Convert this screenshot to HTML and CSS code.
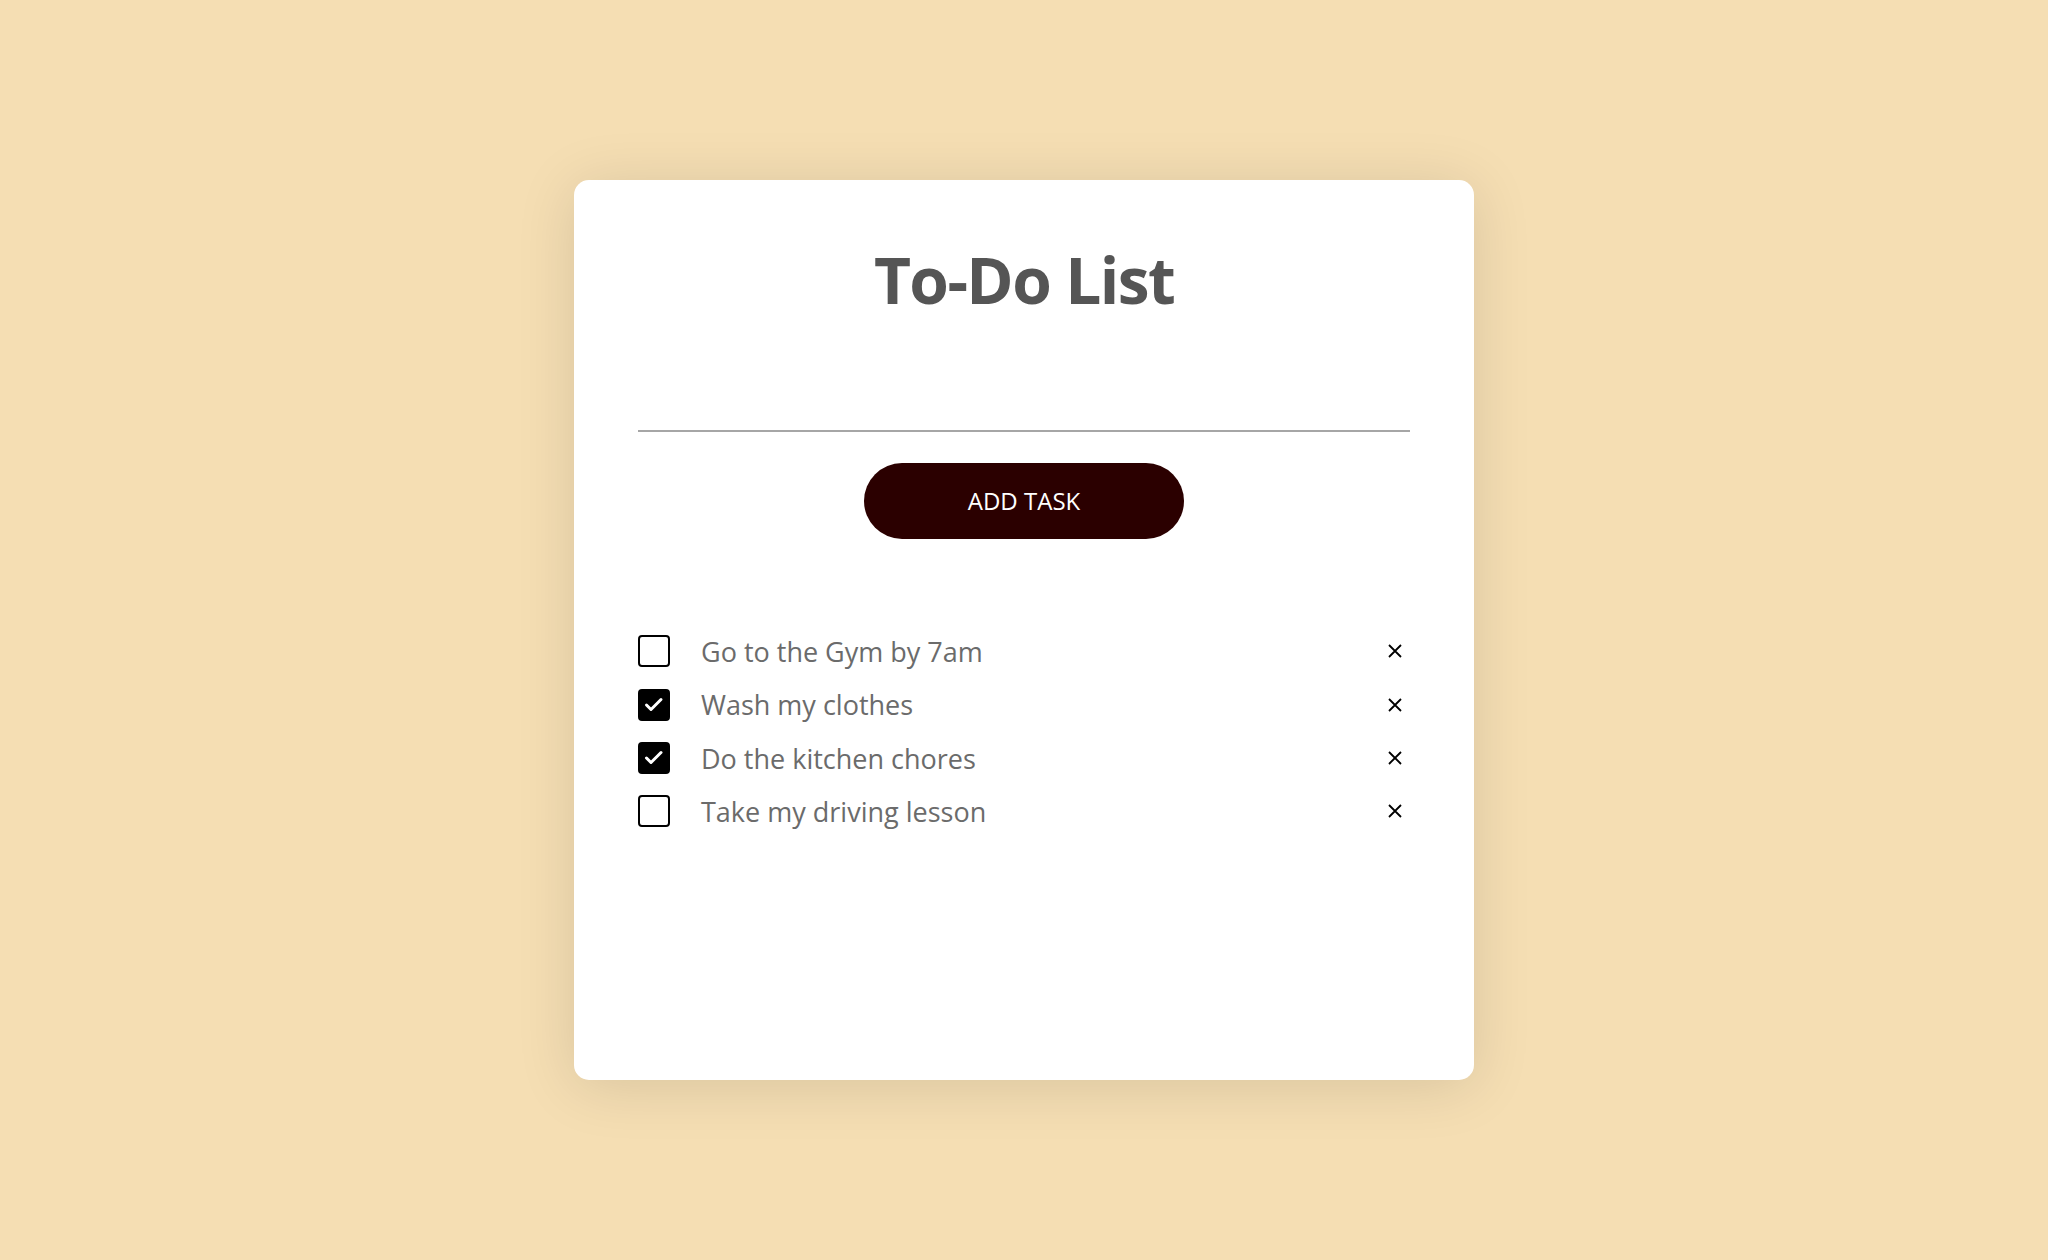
FILE: index.html
```html
<!DOCTYPE html>
<html lang="en">
<head>
<meta charset="utf-8">
<title>To-Do List</title>
<link rel="stylesheet" href="styles.css">
</head>
<body>
<main class="page">
  <section class="card">
    <h1 class="title">To-Do List</h1>
    <input class="task-input" type="text" aria-label="New task">
    <button class="add-btn" type="button">ADD TASK</button>
    <ul class="task-list">
      <li class="task">
        <span class="check"></span>
        <span class="task-text">Go to the Gym by 7am</span>
        <button class="remove" type="button" aria-label="Remove"><svg viewBox="0 0 14 14" width="14" height="14"><path d="M1 1L13 13M13 1L1 13" stroke="#000" stroke-width="1.8" fill="none"/></svg></button>
      </li>
      <li class="task">
        <span class="check checked"><svg viewBox="0 0 32 32" width="32" height="32"><path d="M8.5 16l4.5 4.5 10-10" stroke="#fff" stroke-width="3" fill="none" stroke-linecap="round" stroke-linejoin="round"/></svg></span>
        <span class="task-text">Wash my clothes</span>
        <button class="remove" type="button" aria-label="Remove"><svg viewBox="0 0 14 14" width="14" height="14"><path d="M1 1L13 13M13 1L1 13" stroke="#000" stroke-width="1.8" fill="none"/></svg></button>
      </li>
      <li class="task">
        <span class="check checked"><svg viewBox="0 0 32 32" width="32" height="32"><path d="M8.5 16l4.5 4.5 10-10" stroke="#fff" stroke-width="3" fill="none" stroke-linecap="round" stroke-linejoin="round"/></svg></span>
        <span class="task-text">Do the kitchen chores</span>
        <button class="remove" type="button" aria-label="Remove"><svg viewBox="0 0 14 14" width="14" height="14"><path d="M1 1L13 13M13 1L1 13" stroke="#000" stroke-width="1.8" fill="none"/></svg></button>
      </li>
      <li class="task">
        <span class="check"></span>
        <span class="task-text">Take my driving lesson</span>
        <button class="remove" type="button" aria-label="Remove"><svg viewBox="0 0 14 14" width="14" height="14"><path d="M1 1L13 13M13 1L1 13" stroke="#000" stroke-width="1.8" fill="none"/></svg></button>
      </li>
    </ul>
  </section>
</main>
</body>
</html>
```
FILE: styles.css
```css
* { box-sizing: border-box; }

html, body {
  margin: 0;
  padding: 0;
}

body {
  background: #f5deb3;
  font-family: "Open Sans", "Noto Sans", sans-serif;
}

.page {
  height: 1260px;
  display: flex;
  align-items: center;
  justify-content: center;
}

.card {
  width: 900px;
  height: 900px;
  background: #fff;
  border-radius: 15px;
  box-shadow: 0 6px 60px rgba(0, 0, 0, 0.12);
  padding: 62px 64px 0;
  display: flex;
  flex-direction: column;
  align-items: center;
}

.title {
  margin: 0;
  font-size: 64px;
  line-height: 1.2;
  font-weight: 700;
  color: #555;
  letter-spacing: -1.6px;
}

.task-input {
  width: 100%;
  height: 50px;
  margin-top: 63px;
  border: none;
  border-bottom: 2px solid #a6a6a6;
  outline: none;
  background: transparent;
  font-family: inherit;
  font-size: 24px;
}

.add-btn {
  margin-top: 31px;
  width: 320px;
  height: 76px;
  border: none;
  border-radius: 38px;
  background: #2b0000;
  color: #fff;
  font-family: inherit;
  font-size: 24px;
  font-weight: 500;
}

.task-list {
  list-style: none;
  margin: 86px 0 0;
  padding: 0;
  width: 100%;
}

.task {
  height: 53.3px;
  display: flex;
  align-items: center;
}

.check {
  width: 32px;
  height: 32px;
  border: 2px solid #000;
  border-radius: 4px;
  flex: none;
  display: flex;
  align-items: center;
  justify-content: center;
}

.check.checked {
  background: #000;
}

.check svg {
  flex: none;
  margin: -2px;
}

.task-text {
  margin-left: 31px;
  font-size: 27px;
  color: #6b6b6b;
  flex: 1;
}

.remove {
  width: 30px;
  height: 30px;
  padding: 0;
  border: none;
  background: transparent;
  display: flex;
  align-items: center;
  justify-content: center;
}
```
